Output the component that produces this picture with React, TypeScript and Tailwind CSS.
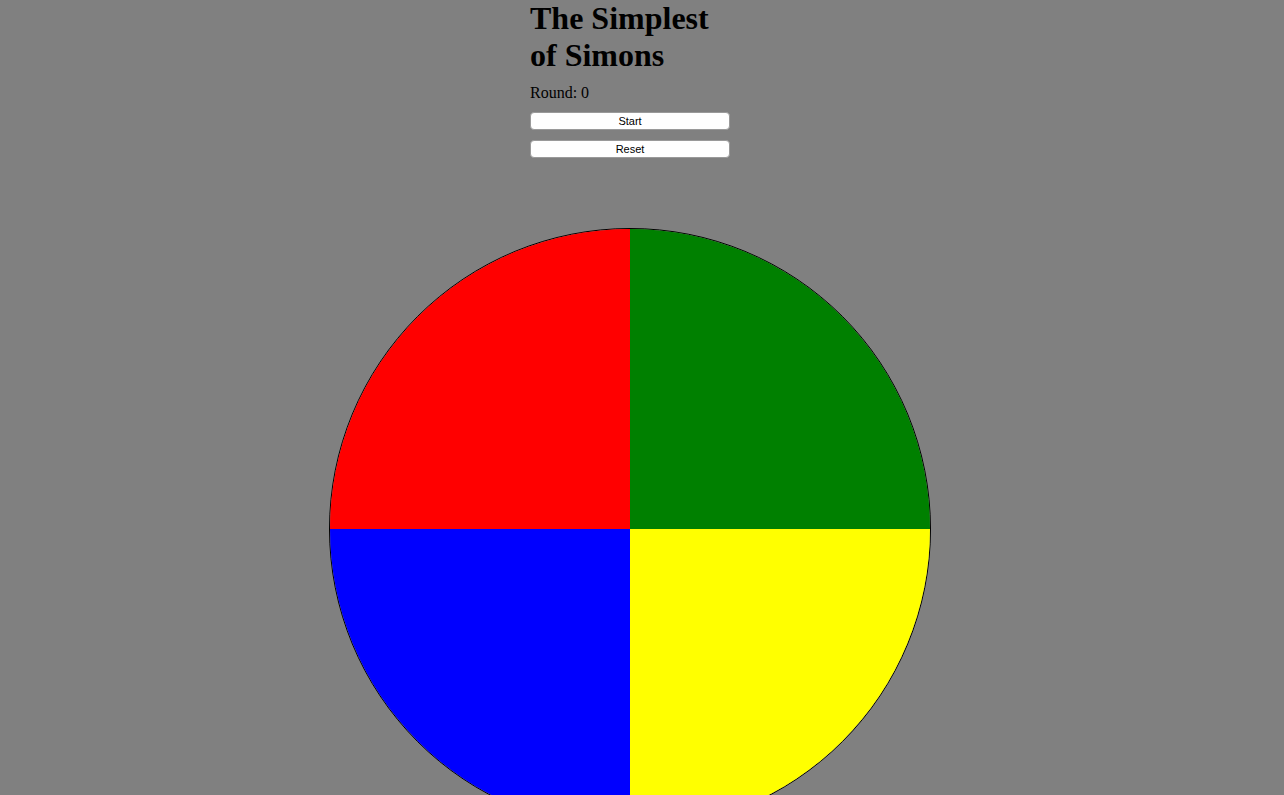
import React from "react";

const quadrants = ["bg-[#ff0000]", "bg-[#008000]", "bg-[#0000ff]", "bg-[#ffff00]"];

export default function App() {
  return (
    <div className="min-h-[795px] w-full bg-[#808080] overflow-hidden">
      <div className="flex flex-col items-center w-[1260px]">
        <div className="w-[200px] flex flex-col font-['Liberation_Serif',serif] text-black">
          <h1 className="text-[32px] font-bold leading-[37px] m-0">The Simplest of Simons</h1>
          <p className="text-[16px] leading-[18px] mt-[10px]">Round: 0</p>
          <button className="mt-[10px] h-[18px] w-[200px] bg-white rounded-[4px] border border-[#9a9a9a] text-[11px] leading-none font-['Liberation_Sans',sans-serif] text-black">
            Start
          </button>
          <button className="mt-[10px] h-[18px] w-[200px] bg-white rounded-[4px] border border-[#9a9a9a] text-[11px] leading-none font-['Liberation_Sans',sans-serif] text-black">
            Reset
          </button>
        </div>
        <div className="mt-[70px] w-[602px] h-[602px] rounded-full border border-black overflow-hidden grid grid-cols-2 grid-rows-2">
          {quadrants.map((c) => (
            <div key={c} className={c} />
          ))}
        </div>
      </div>
    </div>
  );
}
